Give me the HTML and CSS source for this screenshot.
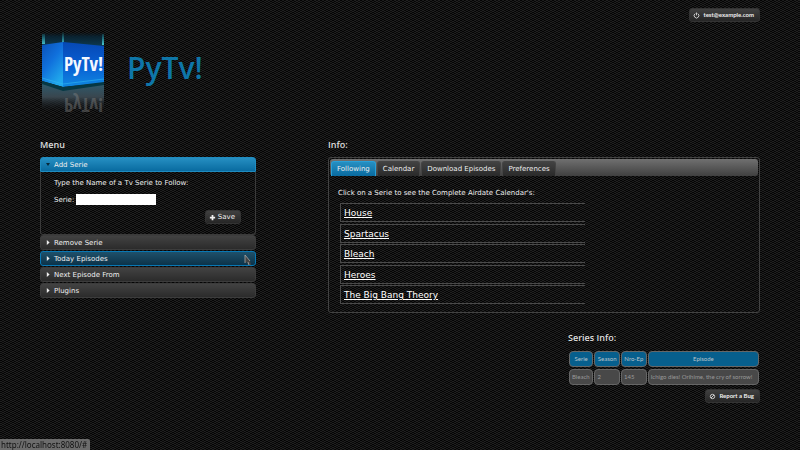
FILE: index.html
```html
<!DOCTYPE html>
<html lang="en">
<head>
<meta charset="utf-8">
<title>PyTv!</title>
<link rel="stylesheet" href="styles.css">
</head>
<body>
<div class="page">
  <div class="userbar">
    <button class="btn btn-small" type="button">
      <svg class="icon" viewBox="0 0 8 8"><path d="M2.6 1.8a2.7 2.7 0 1 0 2.8 0M4 .6v3.2" fill="none" stroke="#ddd" stroke-width="1"/></svg>test@example.com</button>
  </div>
  <header class="brand">
    <svg class="logo" viewBox="0 0 64 84" role="img" aria-label="PyTv! box">
      <defs>
        <linearGradient id="face" x1="0" y1="0" x2="0" y2="1"><stop offset="0" stop-color="#0648b4"/><stop offset=".55" stop-color="#0860d4"/><stop offset="1" stop-color="#1088e0"/></linearGradient>
        <linearGradient id="side" x1="0" y1="0" x2=".6" y2="1"><stop offset="0" stop-color="#0a50b8"/><stop offset=".5" stop-color="#1070dc"/><stop offset="1" stop-color="#20a8ec"/></linearGradient>
        <linearGradient id="top" x1="0" y1="0" x2="0" y2="1"><stop offset="0" stop-color="#0a1c26" stop-opacity="0"/><stop offset=".3" stop-color="#0a2230"/><stop offset="1" stop-color="#0c3c54"/></linearGradient>
        <linearGradient id="floor" x1="0" y1="0" x2="0" y2="1"><stop offset="0" stop-color="#2c5c70"/><stop offset=".5" stop-color="#39464e"/><stop offset="1" stop-color="#101418" stop-opacity="0"/></linearGradient>
        <linearGradient id="beam" x1="0" y1="0" x2="0" y2="1"><stop offset="0" stop-color="#2090a0" stop-opacity="0"/><stop offset="1" stop-color="#48c8d0"/></linearGradient>
      </defs>
      <path d="M2 2H64V17L23 13 2 17z" fill="url(#top)"/>
      <path d="M2 52 23 59 64 53V82H2z" fill="url(#floor)"/>
      <path d="M2 15 23 12V57L2 51z" fill="url(#side)"/>
      <path d="M23 12 64 16V53L23 57z" fill="url(#face)"/>
      <path d="M2 51 23 57 64 52V55L23 61 2 54z" fill="#063844"/>
      <path d="M2 48 23 54 64 49" fill="none" stroke="#30b8f0" stroke-opacity=".6"/>
      <path d="M2 4h3v10H2zM22 1h2v11h-2zM62 4h2v11h-2z" fill="url(#beam)"/>
      <text class="logo-text" x="24" y="41">PyTv!</text>
      <g transform="translate(24 68) scale(1 -1)"><text class="logo-text logo-mirror" x="0" y="0">PyTv!</text></g>
    </svg>
    <h1>PyTv!</h1>
  </header>
  <main class="columns">
    <section class="menu">
      <h2>Menu</h2>
      <div class="accordion">
        <button class="acc-head active" type="button"><span class="tri down"></span>Add Serie</button>
        <form class="acc-body">
          <p>Type the Name of a Tv Serie to Follow:</p>
          <div class="field"><label for="serie">Serie:</label><input id="serie" type="text"></div>
          <div class="actions"><button class="btn" type="button"><svg class="icon" viewBox="0 0 8 8"><path d="M4 1v6M1 4h6" stroke="#eee" stroke-width="2"/></svg>Save</button></div>
        </form>
        <button class="acc-head" type="button"><span class="tri"></span>Remove Serie</button>
        <button class="acc-head hover" type="button"><span class="tri"></span>Today Episodes
          <svg class="cursor" viewBox="0 0 8 12"><path d="M1 1v8l2-1 1 3h3L6 7z" fill="#444"/><path d="M1 1v8M1 1l5 6M4 8l1 3" fill="none" stroke="#aaa" stroke-width=".8"/></svg></button>
        <button class="acc-head" type="button"><span class="tri"></span>Next Episode From</button>
        <button class="acc-head" type="button"><span class="tri"></span>Plugins</button>
      </div>
    </section>
    <section class="info">
      <h2>Info:</h2>
      <div class="tabs">
        <nav class="tabbar">
          <a class="tab current" href="#following">Following</a>
          <a class="tab" href="#calendar">Calendar</a>
          <a class="tab" href="#download">Download Episodes</a>
          <a class="tab" href="#preferences">Preferences</a>
        </nav>
        <div class="panel" id="following">
          <p>Click on a Serie to see the Complete Airdate Calendar's:</p>
          <ul class="series">
            <li><a href="#house">House</a></li>
            <li><a href="#spartacus">Spartacus</a></li>
            <li><a href="#bleach">Bleach</a></li>
            <li><a href="#heroes">Heroes</a></li>
            <li><a href="#theory">The Big Bang Theory</a></li>
          </ul>
        </div>
      </div>
    </section>
  </main>
  <section class="details">
    <h2>Series Info:</h2>
    <table>
      <thead><tr><th>Serie</th><th>Season</th><th>Nro-Ep</th><th>Episode</th></tr></thead>
      <tbody><tr><td>Bleach</td><td>2</td><td>145</td><td>Ichigo dies! Orihime, the cry of sorrow!</td></tr></tbody>
    </table>
    <button class="btn btn-small btn-bug" type="button"><svg class="icon" viewBox="0 0 8 8"><circle cx="4" cy="4" r="2.500" fill="none" stroke="#ddd"/><path d="M2.300 5.700 5.700 2.300" stroke="#ddd"/></svg>Report a Bug</button>
  </section>
</div>
<div class="status">http://localhost:8080/#</div>
</body>
</html>
```
FILE: styles.css
```css
* { box-sizing: border-box; }
body {
  margin: 0;
  color: #eee;
  font: 7px/10px "DejaVu Sans", sans-serif;
  background:
    conic-gradient(rgba(255, 255, 255, .02) 25%, transparent 0 50%, rgba(255, 255, 255, .02) 0 75%, transparent 0) 0 0 / 10px 6px,
    conic-gradient(#1c1c1c 25%, #040404 0 50%, #1c1c1c 0 75%, #040404 0) 0 0 / 4px 2px;
}
button, input { font: inherit; color: inherit; }
h1, h2, p, ul { margin: 0; }
h1, h2 { font-family: "Open Sans", sans-serif; }
h2 { font-size: 9px; line-height: 12px; font-weight: 600; color: #ddd; }
.page { padding: 8px 5% 0; }
.userbar { display: flex; justify-content: flex-end; }
.btn {
  display: inline-flex;
  align-items: center;
  gap: 2px;
  height: 14px;
  padding: 0 5px 0 3px;
  border: 1px solid #333;
  border-radius: 3px;
  background: linear-gradient(#404040, #262626);
}
.btn-small { gap: 3px; font-family: Lato, sans-serif; font-size: 6px; font-weight: bold; }
.icon { width: 7px; height: 7px; flex: none; }
.brand { display: flex; align-items: center; gap: 23px; margin-top: 8px; }
.logo { width: 64px; height: 84px; }
.logo-text { font: bold 19px "Open Sans Condensed", "Open Sans", sans-serif; fill: #f4f8ff; }
.logo-mirror { fill: #888; opacity: .4; }
h1 { margin-bottom: 8px; color: #0e76a8; font-size: 30px; line-height: 40px; font-weight: 600; }
.columns { display: grid; grid-template-columns: 30% 60%; justify-content: space-between; margin-top: 25px; }
.columns h2 { margin-bottom: 6px; }
.accordion { display: flex; flex-direction: column; }
.acc-head {
  position: relative;
  display: flex;
  align-items: center;
  gap: 4px;
  height: 15px;
  margin-bottom: 1px;
  padding: 0 6px 0 5px;
  border: 1px solid #3c3c3c;
  border-radius: 3px;
  background: linear-gradient(#424242, #2b2b2b);
  text-align: left;
}
.acc-head.active { margin: 0; border-color: #1f8cc0; border-radius: 3px 3px 0 0; background: linear-gradient(#268fc2, #096ba0); }
.acc-head.hover { border-color: #0878b4; background: linear-gradient(#1f506a, #0c3349); }
.tri { width: 4px; height: 5px; background: #eee; clip-path: polygon(20% 0, 90% 50%, 20% 100%); }
.tri.down { height: 3px; background: #082838; clip-path: polygon(0 0, 100% 0, 50% 100%); }
.cursor { position: absolute; right: 3px; bottom: -1px; width: 8px; height: 12px; }
.acc-body { padding: 6px 14px 10px 13px; border: 1px solid #3a3a3a; border-top: 0; border-radius: 0 0 3px 3px; }
.field { display: flex; align-items: center; gap: 2px; margin-top: 6px; }
.field input { width: 80px; height: 11px; padding: 0 2px; border: 0; background: #fff; color: #111; }
.actions { display: flex; justify-content: flex-end; margin-top: 5px; }
.tabs { padding: 1px 1px 8px; border: 1px solid #424242; border-radius: 3px; }
.tabbar { display: flex; align-items: flex-end; gap: 1px; height: 17px; padding: 0 1px; border-radius: 3px; background: linear-gradient(#707070, #404040); }
.tab { height: 15px; padding: 2px 5px; border: 1px solid #444; border-bottom: 0; border-radius: 3px 3px 0 0; background: linear-gradient(#424242, #2a2a2a); color: #eee; text-decoration: none; }
.tab.current { border-color: #28a0d8; background: linear-gradient(#268fc2, #096ba0); }
.panel { padding: 12px 8px 0; }
.series { display: grid; align-content: space-between; width: 60%; min-height: 101px; margin-top: 5px; padding: 0 0 0 2px; list-style: none; }
.series li { height: 19px; padding: 3px; border: 1px solid #4a4a4a; border-right: 0; font-size: 9px; line-height: 12px; }
.series a { color: #fff; }
.details { width: 192px; margin: 19px 0 0 auto; display: flex; flex-direction: column; }
table { margin: 5px 0 2px; border-spacing: 1px 2px; font: 6px/8px Lato, sans-serif; white-space: nowrap; }
th, td { height: 16px; padding: 0 2px; border: 1px solid #666; border-radius: 4px; }
th { background: #075f8d; color: #b8c4cc; font-weight: normal; }
td { background: #484848; color: #999; }
.btn-bug { align-self: flex-end; }
.status { position: fixed; left: 0; bottom: 0; padding: 0 3px 0 1px; border-radius: 0 2px 0 0; background: #6c6c6c; color: #111; font: 8px/11px "Noto Sans", sans-serif; }
```
